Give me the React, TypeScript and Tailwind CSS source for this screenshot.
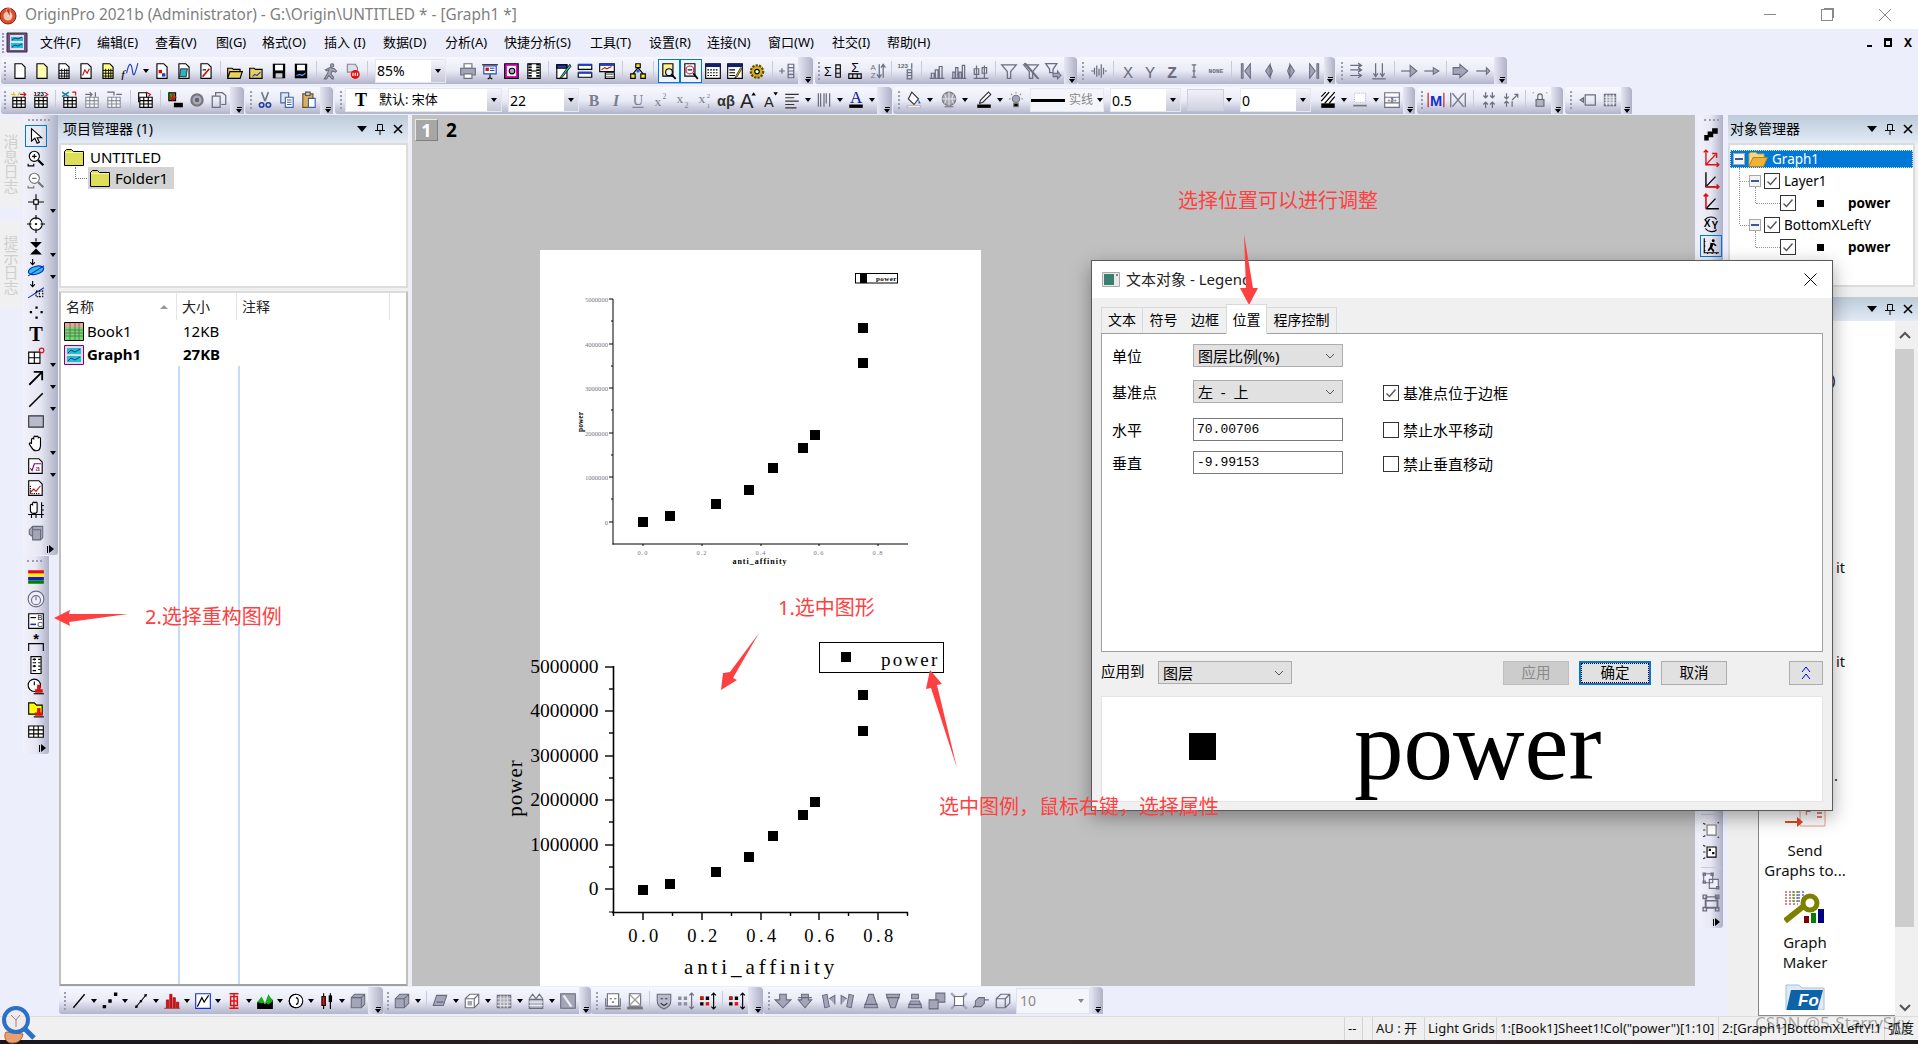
import React from "react";

const pg = (f = "#fff") => <path d="M3.5 1.5h6l3 3v10h-9z" fill={f} stroke="#000" />;
const gl = <path d="M6 6v8M8.5 6v8M10.5 6v8M3.5 7.5h9M3.5 10h9M3.5 12.5h9" stroke="#000" strokeWidth=".8" />;
const tx = (t: string, x: number, y: number, s: number, f = "#000", w = 400, fam = "Liberation Sans") => (
  <text x={x} y={y} fontSize={s} fill={f} fontWeight={w} fontFamily={fam} textAnchor="middle">{t}</text>
);
const gy = (d: string) => <path d={d} fill="#a3a6b8" stroke="#666a7a" strokeWidth=".9" />;
const gs = (d: string) => <path d={d} fill="none" stroke="#6b6e7e" strokeWidth="1.1" />;
const grid = (f = "#fff", c = "#000") => (
  <path d="M2.5 5.5h11v9h-11zM2.5 8.5h11M2.5 11.5h11M6 5.5v9M10 5.5v9" fill={f} stroke={c} />
);
const mag = (c = "#000") => (
  <>
    <circle cx="6.5" cy="6.5" r="4.5" fill="#fff" stroke={c} />
    <path d="M10 10l4.5 4.5" stroke={c} strokeWidth="2" />
  </>
);

const ICONS: Record<string, React.ReactNode> = {
  doc: pg(),
  docY: pg("#ffffb0"),
  docG: <>{pg()}{gl}</>,
  docC: <>{pg()}<path d="M5 12l2-5 2 3 2-4" stroke="#d00" fill="none" /></>,
  docGY: <>{pg("#ffff80")}{gl}</>,
  fx: <><text x="0" y="15" fontSize="12" fontStyle="italic" fontFamily="Liberation Serif">f</text><path d="M5 10c2-10 4-10 5-3s2 6 5-6" stroke="#2040c0" fill="none" /></>,
  docB: <>{pg()}<path d="M5 7h3v3H5z" fill="#d00" /><path d="M8 10h3v3H8z" fill="#2040c0" /></>,
  docT: <>{pg()}<path d="M5 6h6l-1 7H4z" fill="#30b0c0" stroke="#000" strokeWidth=".6" /></>,
  docR: <>{pg()}<path d="M5 13l6-7" stroke="#d00" strokeWidth="1.4" /><path d="M5 7h3" stroke="#000" /></>,
  open: <path d="M1.5 5.5h4l1 1h6v2h2l-2 6h-11zM1.5 14.5l2-6h9" fill="#e8d060" stroke="#000" />,
  openC: <><path d="M1.5 5.5h4l1 1h6v8h-11z" fill="#e8d060" stroke="#000" /><path d="M4 13l2-2 2 1 3-3" stroke="#2040c0" fill="none" /></>,
  save: <><path d="M2.5 1.5h11v13h-11z" fill="#000" /><path d="M4.5 2.5h7v5h-7z" fill="#fff" /><path d="M5 10h6v4H5z" fill="#ccc" /></>,
  saveC: <><path d="M2.5 1.5h11v13h-11z" fill="#000" /><path d="M4.5 2.5h7v5h-7z" fill="#fff" /><path d="M4 12l3-1 2 1 3-2" stroke="#60a0ff" fill="none" /></>,
  run: gy("M9 1.5a1.5 1.5 0 1 1 0 3 1.5 1.5 0 0 1 0-3zM7 5l4 1 2 2-1 1-3-1-1 3 2 2v2H9l-3-3-2 3H2l3-5 1-3-2 1-1-1z"),
  stop: <><path d="M3 2h7l2 3v4H3z" fill="#dde" stroke="#888" /><circle cx="10" cy="11" r="4" fill="#e01010" /><path d="M8 9.5v3M10 9.5v3M12 9.5v3" stroke="#fff" /></>,
  print: <><path d="M4.5 1.5h7v4h-7z" fill="#fff" stroke="#6b6e7e" /><path d="M1.5 5.5h13v6h-13z" fill="#a3a6b8" stroke="#6b6e7e" /><path d="M4.5 10.5h7v4h-7z" fill="#fff" stroke="#6b6e7e" /></>,
  slide: <><path d="M1 2h14v1H1z" fill="#000" /><path d="M2.5 3.5h11v7h-11z" fill="#fff" stroke="#2040c0" /><path d="M4 5h3v3H4z" fill="#d01010" /><path d="M8 5h4v1H8zM8 7h4v1H8z" fill="#2040c0" /><path d="M8 11v3M6 15l2-1 2 1" stroke="#000" fill="none" /></>,
  pink: <><path d="M1.5 1.5h12v13h-12z" fill="#e010c0" stroke="#000" /><path d="M3.5 3.5h8v9h-8z" fill="#fff" /><circle cx="8" cy="8" r="2.5" fill="#b0a0c0" stroke="#000" /></>,
  film: <><path d="M2.5 1.5h11v13h-11z" fill="#fff" stroke="#000" /><path d="M4.5 1.5v13M11.5 1.5v13" stroke="#000" strokeWidth="3" strokeDasharray="1.5 1" /><path d="M5.5 8h5" stroke="#000" /></>,
  pen: <><path d="M2.5 2.5h9v12h-9z" fill="#fff" stroke="#000" /><path d="M2.5 2.5h9v3h-9z" fill="#2040c0" stroke="#000" /><path d="M14 2L6 13l-1 2 2-1 8-10z" fill="#30c0a0" stroke="#000" strokeWidth=".7" /></>,
  lines: <><path d="M2 2.5h12v4H2z" fill="#fff" stroke="#000" /><path d="M2 1.5h12v2H2z" fill="#2040c0" /><path d="M2 9.5h12v4H2z" fill="#fff" stroke="#000" /><path d="M2 8.5h12v2H2z" fill="#2040c0" /></>,
  winC: <><path d="M1.5 1.5h13v7h-13z" fill="#fff" stroke="#000" /><path d="M1.5 1.5h13v2h-13z" fill="#2040c0" /><path d="M3 7l3-2 2 1 4-2" stroke="#d01010" fill="none" /><path d="M6.5 9.5h8v5h-8z" fill="#fff" stroke="#000" /><path d="M7 11h7M7 13h7" stroke="#888" /></>,
  tree: <><path d="M6 1.5h4v3.5H6zM1.5 10.5h4v4h-4zM10.5 10.5h4v4h-4z" fill="#ffe020" stroke="#000" /><path d="M8 5l-4.5 5.5M8 5l4.5 5.5" stroke="#000" /><circle cx="8" cy="8" r="1.5" fill="#2060e0" /></>,
  zdoc: <><path d="M2.5 1.5h9v11h-9z" fill="#fff08a" stroke="#000" /><circle cx="8" cy="9" r="3" fill="#e8f8ff" stroke="#000" /><path d="M10 11l4 4" stroke="#000" strokeWidth="1.6" /></>,
  zred: <><path d="M2.5 1.5h9v11h-9z" fill="#fff" stroke="#000" /><circle cx="7" cy="7" r="3.5" fill="#ffe" stroke="#d01060" /><path d="M10 10l4 5" stroke="#000" strokeWidth="1.6" /><path d="M5 7h4" stroke="#000" /></>,
  cal: <><path d="M1.5 1.5h13v13h-13z" fill="#fff" stroke="#000" /><path d="M1.5 1.5h13v3h-13z" fill="#10206a" /><path d="M3 7h10M3 9.5h10M3 12h10" stroke="#000" strokeDasharray="1.5 1" /></>,
  note: <><path d="M1.5 1.5h13v13h-13z" fill="#fff" stroke="#000" /><path d="M1.5 1.5h13v3h-13z" fill="#10206a" /><path d="M3 7h5M3 9.5h5M3 12h5" stroke="#000" /><path d="M13 5l-4 7-1 2 2-1 4-7z" fill="#e0c020" stroke="#000" strokeWidth=".6" /></>,
  gear: <><circle cx="8" cy="8.5" r="5.5" fill="#d0b020" stroke="#605000" strokeDasharray="2 1" strokeWidth="2" /><circle cx="8" cy="8.5" r="2" fill="#fff" stroke="#000" /></>,
  addG: gs("M1 8h5M3.5 5.5v5M9 2h5v12H9zM9 5h5M9 8h5M9 11h5"),
  sig: <><text x="0" y="12" fontSize="11" fontFamily="Liberation Sans">Σ</text><path d="M10.5 2.5h4v11h-4zM10.5 6h4M10.5 10h4" fill="none" stroke="#000" /></>,
  sigB: <><text x="8" y="9" fontSize="11" textAnchor="middle" fontFamily="Liberation Sans">Σ</text><path d="M2.5 10.5h11v4h-11zM6 10.5v4M10 10.5v4" fill="none" stroke="#000" /></>,
  sort: <>{tx("A", 4.5, 7, 7, "#777")}{tx("Z", 4.5, 14, 7, "#777")}{gs("M10 2v11M8 11l2 3 2-3M13.5 14V3M11.5 5l2-3 2 3")}</>,
  num: <>{tx("123", 6, 5.5, 5.5, "#666", 700)}{gs("M10 7h4v8h-4zM10 9.5h4M10 12h4M14 1v5")}</>,
  barsA: gs("M1.5 14.5h13M3 14V10h2.5v4M6.5 14V7H9v7M10 14V4h2.5v10"),
  barsB: gs("M1.5 14.5h13M2.5 14V9h2v5M5 14V5h2v9M8 14V9h2v5M11 14V3h2v11"),
  barsC: gs("M1.5 14.5h13M4 14V3M11 14V3M2 11h4V6H2zM9 10h4V5H9z"),
  fun: gs("M1.5 2.5h13L9.5 8.5v6h-3v-6z"),
  funX: <>{gs("M1.5 2.5h13L9.5 8.5v6h-3v-6z")}{gs("M2 1l12 14M3 1l12 14")}</>,
  funR: <>{gs("M1.5 1.5h10L8 6.5v3H5v-3z")}{gy("M8 10h4V8l3 4-3 3v-2H8z")}</>,
  spike: gs("M1 8h3M15 8h-2M4 5v6M6 3v10M8 6v6M10 2v12M12 5v6"),
  X: tx("X", 8, 14, 15, "#6b6e7e", 400, "Liberation Mono"),
  Y: tx("Y", 8, 14, 15, "#6b6e7e", 400, "Liberation Mono"),
  Z: tx("Z", 8, 14, 15, "#6b6e7e", 700, "Liberation Mono"),
  Ibar: gs("M6 2.5h4M8 2.5v11M6 13.5h4M6.5 8h3"),
  NONE: tx("NONE", 8, 10, 5.5, "#6b6e7e", 700, "Liberation Mono"),
  first: gy("M3 1.5h1.5v13H3zM6 8l5-6.5v13z"),
  prev: gy("M5 8l4-6v12zM9 2.5l2 5.5-2 5.5z"),
  next: gy("M11 8L7 2v12zM7 2.5L5 8l2 5.5z"),
  last: gy("M11.5 1.5H13v13h-1.5zM10 8L5 1.5v13z"),
  rr1: gs("M2 3h10M9 1l3 2-3 2M2 7h10M9 5l3 2-3 2M2 12h10M9 10l3 2-3 2"),
  rr2: gs("M5 1v12M3 10l2 3 2-3M11 1v12M9 10l2 3 2-3M2 15h12"),
  arR: <>{gs("M1 8h10")}{gy("M9 3l6 5-6 5z")}</>,
  arS: <>{gs("M2 8h9")}{gy("M10 5l5 3-5 3z")}</>,
  arP: <>{gy("M1 5h6V2l7 6-7 6v-3H1z")}</>,
  arT: <>{gs("M2 8h9")}{gy("M11 5l3 3-3 3z")}</>,
  gs: <>{grid()}<path d="M3 1l1 3M1 3l4 .5M9 1L7 4" stroke="#e8c000" /><path d="M9 3h5M12 1l2 2-2 2" stroke="#d01010" fill="none" /></>,
  gn: <>{grid()}{tx("123", 6, 4.8, 5.5, "#000", 700)}<path d="M11 1l3 2-3 2" stroke="#d01010" fill="none" /></>,
  gx: <>{grid("#fff", "#000")}<path d="M1 1l6 4M7 1L1 5" stroke="#2080a0" strokeWidth="1.6" /><path d="M10 1h3v3" stroke="#d01010" fill="none" /></>,
  ga: <>{grid("#fff", "#8a8d9e")}{gs("M2 3h6M6 1l2 2-2 2M11 5V1")}</>,
  gr: <>{grid("#fff", "#8a8d9e")}{gs("M2 1h6v3M10 3h5")}</>,
  gc: <><path d="M1.5 1.5h7v8h-7z" fill="#fff" stroke="#000" />{grid()}<path d="M8 1l4 2-2 2" stroke="#d01010" fill="none" /></>,
  imp: <><path d="M2.5 1.5h6v7h-6z" fill="#20a030" stroke="#000" /><path d="M6 1v6M3 5l3 3 3-3" stroke="#d01010" strokeWidth="1.4" fill="none" /><path d="M7 10.5h8v4H7z" fill="#000" /></>,
  gearG: <><circle cx="8" cy="8" r="5" fill="#a8abbd" stroke="#777" strokeWidth="2" /><circle cx="8" cy="8" r="2" fill="#666" /></>,
  docs: gs("M2 4.5h7v10H2zM5 4V1.5h6L14 4v8h-4"),
  scis: <><path d="M5 1l3 8M11 1L8 9" stroke="#707788" strokeWidth="1.4" /><circle cx="5" cy="12.5" r="2" fill="none" stroke="#2040a0" strokeWidth="1.4" /><circle cx="11" cy="12.5" r="2" fill="none" stroke="#2040a0" strokeWidth="1.4" /></>,
  copy: <><path d="M2.5 1.5h7v9h-7z" fill="#dfe8fa" stroke="#4060a0" /><path d="M6.5 5.5h7v9h-7z" fill="#fff" stroke="#4060a0" /><path d="M8 8h4M8 10h4M8 12h4" stroke="#4060a0" /></>,
  paste: <><path d="M2.5 2.5h9v12h-9z" fill="#d8b060" stroke="#705020" /><path d="M5 1h4v3H5z" fill="#ccc" stroke="#555" /><path d="M7.5 6.5h6v8h-6z" fill="#fff" stroke="#4060a0" /></>,
  B: tx("B", 8, 13, 14, "#7a7d8e", 700, "Liberation Serif"),
  I: <text x="8" y="13" fontSize="14" fill="#7a7d8e" fontStyle="italic" fontWeight="700" fontFamily="Liberation Serif" textAnchor="middle">I</text>,
  U: <>{tx("U", 8, 12, 13, "#7a7d8e", 400, "Liberation Serif")}<path d="M3 14.5h10" stroke="#7a7d8e" /></>,
  sup: <>{tx("x", 6, 13, 12, "#7a7d8e", 400, "Liberation Serif")}{tx("2", 12, 7, 7, "#7a7d8e", 400, "Liberation Serif")}</>,
  sub: <>{tx("x", 6, 11, 12, "#7a7d8e", 400, "Liberation Serif")}{tx("2", 12, 15, 7, "#7a7d8e", 400, "Liberation Serif")}</>,
  sbs: <>{tx("x", 6, 11, 12, "#7a7d8e", 400, "Liberation Serif")}{tx("2", 12, 6, 6, "#7a7d8e", 400, "Liberation Serif")}{tx("1", 12, 15, 6, "#7a7d8e", 400, "Liberation Serif")}</>,
  ab: tx("αβ", 8, 13, 13, "#333", 700, "Liberation Sans"),
  AU: <>{tx("A", 7, 15, 18, "#222", 400)}<path d="M13 1l2 3h-4z" fill="#000" /></>,
  AD: <>{tx("A", 7, 14, 13, "#222", 400)}<path d="M13 4l2-3h-4z" fill="#000" /></>,
  alg: <path d="M2 3h12M2 6h8M2 9h12M2 12h8M2 15h10" stroke="#333" />,
  vb: gs("M3 2v12M5 2v12M8 2v12M10 2v9M13 2v12"),
  Ac: <>{tx("A", 8, 11, 15, "#10208a", 400, "Liberation Serif")}<path d="M2 12h12v3H2z" fill="#000" /></>,
  fil: <><path d="M6 1l6 6-4 5-5-5z" fill="#fff" stroke="#333" /><path d="M2 13h12v2H2z" fill="#fff" stroke="#bbb" /><path d="M12 7l2 4h-2z" fill="#2060e0" /></>,
  sph: <><circle cx="8" cy="7" r="6" fill="#a3a6b8" stroke="#777" /><path d="M2 7h12M8 1v12M4 3c2 3 2 5 0 8M12 3c-2 3-2 5 0 8" stroke="#ddd" fill="none" /><path d="M4 14h8" stroke="#777" /></>,
  pcl: <><path d="M12 1l2 2-7 7-3 1 1-3z" fill="#fff" stroke="#333" /><path d="M2 12h12v3H2z" fill="#000" /></>,
  lamp: <><circle cx="8" cy="7" r="3.2" fill="#a3a6b8" stroke="#777" /><path d="M8 1v1M2 7h1M13 7h1M3.5 2.5l1 1M12.5 2.5l-1 1M6 11h4v3H6z" stroke="#777" /></>,
  hat: <><path d="M2 1.5h12v9H2z" fill="#fff" /><path d="M2 9l7-8M2 5l4-4M5 11l9-10M9 11l5-6" stroke="#000" strokeWidth="1.2" /><path d="M2 11h12v4H2z" fill="#000" /></>,
  lb: <><path d="M3 2h10v8H3z" fill="#fff" stroke="#bbc" strokeDasharray="1 1" /><path d="M2 13h12" stroke="#777" strokeWidth="1.5" /></>,
  tbl: <><path d="M1.5 1.5h13v13h-13zM1.5 5.5h13M1.5 10.5h13M8 5.5v5" fill="#fff" stroke="#6b6e7e" />{tx("+3+", 8, 9.5, 5, "#6b6e7e", 700)}</>,
  MM: <><path d="M1 1.5v13M15 1.5v13" stroke="#d01010" /><text x="8" y="13" fontSize="13" fontWeight="700" fill="#1030d0" textAnchor="middle" fontFamily="Liberation Sans">M</text></>,
  Mx: <><path d="M1.5 1.5v13M14.5 1.5v13M3 2l10 12M13 2L3 14" stroke="#7a7d8e" strokeWidth="1.2" /></>,
  v1: gs("M5 1v5M3 4l2 2 2-2M5 15v-5M3 12l2-2 2 2M11 1v5M9 4l2 2 2-2M11 15v-5M9 12l2-2 2 2"),
  v2: gs("M4 2v5M2 5l2 2 2-2M4 14V9M2 11l2-2 2 2M9 8l5-5M11 3h3v3M9 14V9"),
  lock: <><path d="M1.5 1.5h1M13.5 1.5h1" stroke="#888" /><path d="M4.5 7.5h7v6h-7z" fill="#b0b3c4" stroke="#666" /><path d="M6 7V4.5a2 2 0 0 1 4 0V7" fill="none" stroke="#666" /></>,
  frm: <>{gs("M5.5 3.5h9v9h-9z")}{gy("M1 8l3-2v4z")}</>,
  gdd: <>{gy("M3 3h10v10H3z")}<path d="M5 3v10M8 3v10M11 3v10M3 5.5h10M3 8h10M3 10.5h10" stroke="#eee" /></>,
  ptr: <path d="M4 1.5v11l3-2.5 2 4.5 2-1-2-4h4z" fill="#fff" stroke="#000" />,
  zin: <>{mag()}<path d="M4.5 6.5h4M6.5 4.5v4M1 13v2h5v-2" stroke="#000" fill="none" /></>,
  zout: <>{mag("#777")}<path d="M4.5 6.5h4M1 13v2h5v-2" stroke="#777" fill="none" /></>,
  cross: <><path d="M8 1v14M1 8h14" stroke="#000" /><path d="M5.5 5.5h5v5h-5z" fill="#000" /><path d="M6.5 6.5h3v3h-3z" fill="#fff" /></>,
  tgt: <><circle cx="8" cy="8" r="5.5" fill="#fff" stroke="#000" /><path d="M8 0v4M8 12v4M0 8h4M12 8h4" stroke="#000" /><circle cx="8" cy="8" r="1" fill="#000" /></>,
  pts: <path d="M8 1v3M8 12v3M4 5l4 4 4-4zM4 15l4-4 4 4z" fill="#000" stroke="#000" />,
  ell: <><path d="M5 0v5M3 3l2 2 2-2" stroke="#000" fill="none" /><ellipse cx="8" cy="10" rx="7" ry="3.5" fill="#30c0d8" stroke="#1030d0" transform="rotate(-15 8 10)" /><path d="M1 15l14-9" stroke="#1030d0" /></>,
  ln2: <><path d="M5 0v5M3 3l2 2 2-2" stroke="#000" fill="none" /><path d="M1 15l14-9" stroke="#1030d0" /><path d="M8 9h6v5H8zM11 8v7" fill="none" stroke="#000" strokeDasharray="1.5 1" /></>,
  dots: <path d="M7.5 3h2v2h-2zM2.5 7h2v2h-2zM12 7h2v2h-2zM7.5 12h2v2h-2z" fill="#000" />,
  TT: tx("T", 8, 14, 18, "#000", 700, "Liberation Serif"),
  gA: <><path d="M1.5 4.5h10v10h-10zM1.5 9.5h10M6.5 4.5v10" fill="#fff" stroke="#000" /><circle cx="13" cy="3" r="2" fill="none" stroke="#e01010" /></>,
  ne: <path d="M2 14L13 3M6 2.5h7.5V10" fill="none" stroke="#000" strokeWidth="1.6" />,
  ln: <path d="M2 14L14 2" stroke="#000" strokeWidth="1.4" />,
  rct: <path d="M1.5 2.5h13v10h-13z" fill="#b8bbcb" stroke="#333" />,
  hand: <path d="M4 8V4a1 1 0 0 1 2 0V2a1 1 0 0 1 2 0v0a1 1 0 0 1 2 0v1a1 1 0 0 1 2 0v6c0 3-1 5-4 5-2 0-3-1-4-3L2 8a1 1 0 0 1 2 0z" fill="#fff" stroke="#000" />,
  sqr: <><path d="M1.5 1.5h9l3 3v10h-12z" fill="#fff" stroke="#000" /><path d="M3 10l1.5 2 2-6h6" fill="none" stroke="#800080" />{tx("a", 9.5, 12, 7, "#800080")}</>,
  gdoc: <><path d="M1.5 1.5h9l3 3v10h-12z" fill="#fff" stroke="#000" /><path d="M3 12l3-3 2 2 4-5" stroke="#d01010" fill="none" /><path d="M3 6v7h9" stroke="#000" strokeDasharray="1 1" fill="none" /></>,
  hg: <><path d="M3 8V4a1 1 0 0 1 2 0V2a1 1 0 0 1 2 0 1 1 0 0 1 2 0v7c0 1-1 2-3 2s-3-1-3-3z" fill="#fff" stroke="#000" /><path d="M13 1v14M1 12h14M4 12v3M8 12v3M13 4h2M13 8h2" stroke="#000" /></>,
  box: gy("M2 6l3-3h9v10l-2 2H5v-3L2 10zM5 3v9M5 6h7v9"),
  col: <><path d="M1 2h14v3H1z" fill="#e01010" /><path d="M1 5h14v3H1z" fill="#f8f000" /><path d="M1 8h14v3H1z" fill="#1818e0" /><path d="M1 11h14v3H1z" fill="#008000" /></>,
  cir: <><circle cx="8" cy="8" r="7" fill="#eef" stroke="#6b6e7e" /><circle cx="8" cy="9" r="4" fill="none" stroke="#6b6e7e" /><path d="M8 6v3" stroke="#6b6e7e" /></>,
  leg: <><path d="M1.5 1.5h13v13h-13z" fill="#fff" stroke="#000" /><path d="M3 5h5" stroke="#000" />{tx("B", 11.5, 7, 6.5)}<path d="M3 11h5" stroke="#1030d0" strokeWidth="1.4" />{tx("C", 11.5, 13, 6.5)}</>,
  str: <>{tx("*", 8, 9, 13, "#000", 700)}<path d="M1.5 15V8.5h13V15" fill="none" stroke="#000" /></>,
  rul: <><path d="M3.5 .5h9v15h-9z" fill="#fff" stroke="#000" /><path d="M5 3h3M5 6h3M6.5 2v2M5 9h3M6.5 8v2M5 13h3M10 3h2M10 6h2M10 9h2M10 12h2" stroke="#000" /></>,
  clk: <><circle cx="6.5" cy="6.5" r="5.5" fill="#fff" stroke="#000" /><path d="M6.5 3v3.5" stroke="#000" /><path d="M9 6h3v4h2v3H7v-3h2z" fill="#e01010" /><path d="M6 14h9" stroke="#000" /></>,
  frd: <><path d="M1.5 2.5h5l2 2h5v8h-12z" fill="#ffff00" stroke="#000" /><path d="M9 7h3v4h2v3H7v-3h2z" fill="#e01010" /><path d="M6 15h9" stroke="#000" /></>,
  tb: <path d="M1.5 3.5h13v10h-13zM1.5 7h13M1.5 10.5h13M6 3.5v10M10 3.5v10" fill="#fff" stroke="#000" />,
  l1: <path d="M3 14L13 2" stroke="#000" strokeWidth="1.2" />,
  l2: <path d="M2 14h2v-2H2zM7 9h2V7H7zM12 3h2V1h-2z" fill="#000" stroke="#000" />,
  l3: <><path d="M3 14L13 2" stroke="#000" /><path d="M3 12h2v2H3zM7 7h2v2H7zM11 2h2v2h-2z" fill="#000" /></>,
  br: <path d="M1 14.5h14M3 14V7h2v7zM6 14V2h2v12zM9 14V5h2v9zM12 14V9h2v5z" fill="#e01010" stroke="#900" strokeWidth=".6" />,
  cb: <><path d="M1.5 1.5h13v13h-13z" fill="#fff" stroke="#1030d0" /><path d="M3 13l4-8 2 4 4-6" stroke="#000" fill="none" /></>,
  er: <path d="M4 1.5h8M8 1.5v13M4 14.5h8M5 4h6v8H5zM5 8h6" fill="none" stroke="#e01010" strokeWidth="1.3" />,
  ar: <><path d="M1 15V9l4-3 3 5 3-7 4 3v8z" fill="#000" /><path d="M1 9l4-5 3 6 3-8 4 6-4 3-3-2-3 1z" fill="#18b018" /></>,
  cr: <><circle cx="8" cy="8" r="6" fill="#fff" stroke="#000" /><path d="M8 2a6 6 0 0 0 0 12M8 5a2 3 0 0 1 0 6" fill="none" stroke="#000" /></>,
  cd: <><path d="M5 1v14M11 1v14" stroke="#000" /><path d="M3.5 4h3v8h-3z" fill="#e01010" stroke="#000" /><path d="M9.5 3h3v6h-3z" fill="#000" /></>,
  cb3: gy("M2 5l3-3h9v9l-3 3H2zM5 2v0M2 5h9v9M11 5l3-3"),
  c1: gy("M2 6l4-4h8v8l-4 4H2zM2 6h8v8M10 6l4-4"),
  c2: gy("M2 12l3-9h9l-3 9zM5 9h6"),
  c3: <><path d="M2 6l4-4h8v8l-4 4H2z" fill="#fff" stroke="#6b6e7e" /><path d="M2 6h8v8M10 6l4-4" stroke="#6b6e7e" fill="none" /><path d="M4 8h4v4H4z" fill="#a3a6b8" /></>,
  c4: <>{gy("M2 3h12v11H2z")}<path d="M2 6h12M2 9h12M2 12h12M5 3v11M8 3v11M11 3v11" stroke="#ddd" /></>,
  c5: <>{gs("M2 6l3-4 3 4 3-4 3 4")}<path d="M2 6.5h12v8H2z" fill="#b8bbcb" stroke="#6b6e7e" /><path d="M2 9h12M2 12h12" stroke="#eee" /></>,
  c6: <>{gy("M1.5 1.5h13v13h-13z")}<path d="M4 3l7 10" stroke="#eee" strokeWidth="2" /></>,
  m1: <><path d="M1.5 5.5v7h13v-7" fill="none" stroke="#6b6e7e" /><path d="M3 1.5h10v11H3z" fill="#fff" stroke="#6b6e7e" /><path d="M5 6h2M9 6h2M7 9h2" stroke="#555" /><path d="M1 14h14v1.5H1z" fill="#777" /></>,
  m2: <><path d="M3 1.5h10v11H3z" fill="#fff" stroke="#6b6e7e" /><path d="M3 2l10 10M13 2L3 12" stroke="#999" /><path d="M1 13h14v2.5H1z" fill="#777" /></>,
  m3: <><path d="M2 2h12v6c0 4-3 6-6 7-3-1-6-3-6-7z" fill="#b8bbcb" stroke="#6b6e7e" /><path d="M5 6h2M9 6h2" stroke="#333" /><path d="M5 10l3 2 3-2" stroke="#333" fill="none" /></>,
  m4: <><path d="M1 4h3v3H1zM1 9h3v3H1zM6 4h3v3H6zM6 9h3v3H6z" fill="#8a8d9e" />{gs("M13 1v14M11 3l2-2 2 2M11 13l2 2 2-2")}</>,
  m5: <><path d="M1 4h3v3H1zM6 4h3v3H6zM1 9h3v3H1z" fill="#000" /><path d="M6 9h3v3H6z" fill="#e01010" /><path d="M1 4h3v3H1z" fill="#e01010" /><path d="M13 1v14M11 3l2-2 2 2M11 13l2 2 2-2" fill="none" stroke="#000" /></>,
  o1: gy("M5 2h6v5h4l-7 7-7-7h4z"),
  o2: gy("M5 2h6v5h3l-6 7-6-7h3zM2 5h12"),
  o3: gy("M4 3l4-1 2 11-4 1zM10 6l5-3v8"),
  o4: gy("M12 3L8 2 6 13l4 1zM6 6L1 3v8"),
  o5: gy("M6 2h4l4 12H2zM2 11h12"),
  o6: gy("M2 2h12l-4 12H6zM2 5h12"),
  o7: gy("M5 2h6v4H5zM4 8h8l2 6H2zM2 11h12"),
  o8: gy("M1 7h8v8H1zM7 1h8v8H9V7H7z"),
  o9: <><path d="M1 1l14 14M15 1L1 15" stroke="#a3a6b8" strokeWidth="2" /><path d="M4 4h8v8H4z" fill="#fff" stroke="#6b6e7e" /></>,
  o10: <>{gy("M3 8l3-3h5v5l-3 3H3z")}{gs("M11 7h4M1 14l2-2")}</>,
  o11: gs("M2 6l4-4h8v8l-4 4H2zM2 6h8v8M10 6l4-4"),
  flg: <path d="M2 15v-3h4V9h4V6h4V1H9v3H5v3H2z" fill="#000" />,
  ax1: <path d="M3.5 1v13H15M1.5 3l2-2 2 2M13 12l2 2-2 2M3.5 14L12 5M9 4h4v4" fill="none" stroke="#e01010" strokeWidth="1.2" />,
  ax2: <><path d="M3.5 1v13H15" fill="none" stroke="#000" strokeWidth="1.2" /><path d="M3.5 14L12 5" stroke="#000" /><path d="M3.5 14H15M13 12l2 2-2 2" fill="none" stroke="#e01010" strokeWidth="1.4" /></>,
  ax3: <><path d="M3.5 14H15M3.5 14L12 5" fill="none" stroke="#000" strokeWidth="1.2" /><path d="M3.5 14V1M1.5 3l2-2 2 2" fill="none" stroke="#e01010" strokeWidth="1.4" /></>,
  xy: <>{tx("X", 4.5, 11, 9, "#000", 700)}{tx("Y", 11.5, 12, 9, "#000", 700)}<path d="M3 4c2-3 8-3 10 0M13 13c-2 3-8 2-10-1" fill="none" stroke="#000" /></>,
  rna: <><path d="M2 1v13h13M2 4h1M2 8h1M2 12h1M5 14v1M9 14v1M13 14v1" fill="none" stroke="#000" /><path d="M10 2a1.3 1.3 0 1 1 0 2.6A1.3 1.3 0 0 1 10 2zM7 5l4 .5 2 2-1 .7-2-1.5-1 3 2 2-1 2-2-3-2 2-1-1 2-3 .5-3z" fill="#000" /></>,
  d1: <><path d="M4.5 3.5h8v9h-8z" fill="#fff" stroke="#777" /><path d="M1 2l2 1M1 8h2M1 14l2-1M14 2l1-1M14 14l1 1" stroke="#333" /></>,
  d2: <><path d="M4.5 3.5h8v9h-8z" fill="#fff" stroke="#000" /><path d="M6 5h2v2H6zM9 8h2v2H9z" fill="#000" /><path d="M1 2l2 1M1 8h2M1 14l2-1" stroke="#333" /></>,
  g1: <path d="M1.5 1.5h8v8h-8zM6.5 6.5h8v8h-8zM1 1h2v2H1zM8 1h2v2H8zM1 8h2v2H1zM13 13h2v2h-2z" fill="#eef" stroke="#6b6e7e" />,
  g2: <path d="M3.5 2.5h10v10h-10zM3 6h11v6H3zM1 1h3v3H1zM12 1h3v3h-3zM1 12h3v3H1zM12 12h3v3h-3z" fill="none" stroke="#6b6e7e" strokeWidth="1.2" />,
};

function Ic({ n, s = 18 }: { n: string; s?: number }) {
  return (
    <svg width={s} height={s} viewBox="0 0 16 16" className="shrink-0">
      {ICONS[n]}
    </svg>
  );
}

function Tri() {
  return <span className="h-0 w-0 border-x-[3px] border-t-[4px] border-x-transparent border-t-black" />;
}

const SEP: Record<string, string> = {
  "3": "w-[3px]",
  "6": "w-[6px]",
  "7": "w-[7px]",
  "8": "w-[8px]",
  "9": "w-[9px]",
  "10": "w-[10px]",
  "11": "w-[11px]",
};

// "name" slot, "name+" slot with drop arrow, "!name" pressed slot, "|8" separator 8 wide, "_3" blank 3 wide
function Icons({ list, narrow }: { list: string; narrow?: boolean }) {
  return (
    <>
      {list.split(" ").map((t, i) => {
        if (t[0] === "|")
          return (
            <span key={i} className={`flex h-[20px] shrink-0 justify-center ${SEP[t.slice(1)]}`}>
              <span className="w-px bg-[#c8cad8]" />
            </span>
          );
        if (t[0] === "_") return <span key={i} className={`shrink-0 ${SEP[t.slice(1)]}`} />;
        const on = t[0] === "!";
        const dd = t.endsWith("+");
        const name = t.replace("!", "").replace("+", "");
        return (
          <React.Fragment key={i}>
            <span
              className={
                on
                  ? "flex h-[24px] w-[22px] shrink-0 items-center justify-center border border-[#0078d7] bg-[#eef4fb]"
                  : narrow
                    ? "flex h-[22px] w-[21px] shrink-0 items-center justify-center"
                    : "flex h-[22px] w-[22px] shrink-0 items-center justify-center"
              }
            >
              <Ic n={name} />
            </span>
            {dd && (
              <span className="flex w-[10px] shrink-0 justify-center">
                <Tri />
              </span>
            )}
          </React.Fragment>
        );
      })}
    </>
  );
}

function Grip() {
  return <span className="mr-[1px] block h-[18px] w-0 shrink-0 border-l-2 border-dotted border-[#9a9cb0]" />;
}

function Seg({ children }: { children: React.ReactNode }) {
  return (
    <div className="flex h-[27px] shrink-0 items-center rounded-l-[3px] bg-linear-to-b from-[#f7f8fe] via-[#e9ebf6] to-[#b2b4ca]">
      {children}
    </div>
  );
}

function End({ w = "w-[13px]" }: { w?: string }) {
  return (
    <span className={`flex h-full shrink-0 items-end justify-end pb-[1px] pr-[2px] rounded-r-[4px] bg-linear-to-r from-[#e6e7f2] to-[#aeb0c6] ${w}`}>
      <span className="flex flex-col items-center gap-[1px]">
        <span className="h-px w-[5px] bg-black" />
        <Tri />
      </span>
    </span>
  );
}

function Combo({ w, children, ml }: { w: string; children?: React.ReactNode; ml?: string }) {
  return (
    <div className={`flex h-[24px] shrink-0 items-center border border-[#e4e6f0] bg-white text-[14px] ${w} ${ml ?? ""}`}>
      <span className="flex flex-1 items-center gap-1 overflow-hidden whitespace-nowrap pl-[1px]">{children}</span>
      <span className="flex h-full w-[14px] items-center justify-center bg-linear-to-b from-[#f4f5fb] to-[#c6c8d8]">
        <Tri />
      </span>
    </div>
  );
}

const MENUS = [
  ["文件(F)", "w-[57px]"],
  ["编辑(E)", "w-[58px]"],
  ["查看(V)", "w-[61px]"],
  ["图(G)", "w-[46px]"],
  ["格式(O)", "w-[62px]"],
  ["插入 (I)", "w-[59px]"],
  ["数据(D)", "w-[62px]"],
  ["分析(A)", "w-[59px]"],
  ["快捷分析(S)", "w-[86px]"],
  ["工具(T)", "w-[59px]"],
  ["设置(R)", "w-[58px]"],
  ["连接(N)", "w-[61px]"],
  ["窗口(W)", "w-[64px]"],
  ["社交(I)", "w-[55px]"],
  ["帮助(H)", "w-[50px]"],
];

function TitleBar() {
  return (
    <div className="flex h-[29px] shrink-0 items-center bg-white">
      <svg width="18" height="20" viewBox="0 0 18 20" className="ml-[-1px] shrink-0">
        <circle cx="9" cy="11" r="8" fill="#d8502c" stroke="#902010" />
        <circle cx="9" cy="11" r="4.5" fill="#f4c8b0" />
        <path d="M7 5l4-3v10z" fill="#d03020" stroke="#fff" strokeWidth=".5" />
      </svg>
      <span className="ml-[8px] whitespace-nowrap text-[15.4px] text-[#7f7f7f]">
        OriginPro 2021b (Administrator) - G:\Origin\UNTITLED * - [Graph1 *]
      </span>
      <div className="ml-auto flex items-center pr-[26px]">
        <span className="h-px w-[12px] bg-[#8a8a8a]" />
        <span className="ml-[45px] flex h-[12px] w-[12px] border border-[#8a8a8a] shadow-[2px_-2px_0_-1px_#8a8a8a]" />
        <svg width="14" height="14" viewBox="0 0 14 14" className="ml-[45px]">
          <path d="M1 1l12 12M13 1L1 13" stroke="#8a8a8a" />
        </svg>
      </div>
    </div>
  );
}

function MenuBar() {
  return (
    <div className="flex h-[27px] shrink-0 items-center bg-[#eceffb] text-[13px] text-black">
      <span className="ml-[2px] h-[20px] w-0 border-l-2 border-dotted border-[#9a9cb0]" />
      <svg width="22" height="21" viewBox="0 0 22 21" className="ml-[2px] shrink-0">
        <path d="M1 1h20v19H1z" fill="#7a4a8a" stroke="#333" />
        <path d="M4 3h14v15H4z" fill="#dfe3e8" />
        <path d="M5 5h12v4H5z" fill="#20c0d0" />
        <path d="M5 11h12v5H5z" fill="#20c0d0" />
        <path d="M6 8l3-2 3 1 4-2M6 15l3-2 3 1 4-2" stroke="#1030a0" fill="none" />
      </svg>
      <div className="ml-[12px] flex">
        {MENUS.map(([t, w]) => (
          <span key={t} className={`whitespace-nowrap ${w}`}>{t}</span>
        ))}
      </div>
      <div className="ml-auto flex items-center gap-[12px] pr-[6px] text-[12px] font-bold">
        <span className="mt-[6px] h-[2px] w-[5px] bg-black" />
        <span className="h-[9px] w-[8px] border-2 border-t-[3px] border-black" />
        <span>X</span>
      </div>
    </div>
  );
}

function Toolbar1() {
  return (
    <div className="flex h-[29px] shrink-0 items-center bg-[#eceffb] pl-[1px]">
      <Seg>
        <span className="ml-[3px] mr-[2px]"><Grip /></span>
        <Icons list="doc docY docG docC docGY fx+ docB docT docR |7 open openC save saveC |8 run stop |7" />
        <Combo w="w-[71px]" ml="ml-[4px]">85%</Combo>
        <span className="w-[11px]" />
        <Icons list="print slide pink film |7 pen lines winC |9 tree |9 !zdoc !zred cal note gear |8 addG" />
        <End w="w-[15px]" />
      </Seg>
      <span className="w-[2px]" />
      <Seg>
        <span className="ml-[3px] mr-[1px]"><Grip /></span>
        <Icons list="sig sigB sort |6 num |10 barsA barsB barsC |6 fun funX funR" />
        <End />
      </Seg>
      <Seg>
        <span className="ml-[5px] mr-[3px]"><Grip /></span>
        <Icons list="spike |7 X Y Z Ibar NONE |9 first prev next last" />
        <End w="w-[11px]" />
      </Seg>
      <span className="w-px" />
      <Seg>
        <span className="ml-[5px] mr-[2px]"><Grip /></span>
        <Icons list="rr1 rr2 |8 arR arS |8 arP arT" />
        <End />
      </Seg>
    </div>
  );
}

function Toolbar2() {
  return (
    <div className="flex h-[30px] shrink-0 items-center bg-[#eceffb] pl-[1px]">
      <Seg>
        <span className="ml-[3px] mr-[1px]"><Grip /></span>
        <Icons list="gs gn |7 gx ga gr |10 gc |7 imp gearG docs" />
        <End w="w-[14px]" />
      </Seg>
      <span className="w-px" />
      <Seg>
        <span className="ml-[5px] mr-[1px]"><Grip /></span>
        <Icons list="scis copy paste" />
        <End />
      </Seg>
      <span className="w-[2px]" />
      <Seg>
        <span className="ml-[5px] mr-[2px]"><Grip /></span>
        <Combo w="w-[157px]">
          <span className="mx-[6px]"><Ic n="TT" s={16} /></span>
          <span className="text-[13px]">默认: 宋体</span>
        </Combo>
        <Combo w="w-[71px]" ml="ml-[6px]">22</Combo>
        <span className="w-[4px]" />
        <Icons list="B I U sup sub sbs ab AU AD alg+ vb+ Ac+" />
        <End w="w-[15px]" />
      </Seg>
      <span className="w-px" />
      <Seg>
        <span className="ml-[5px] mr-[2px]"><Grip /></span>
        <Icons list="fil+ _3 sph+ _3 pcl+ lamp" />
        <div className="ml-[3px] flex h-[24px] w-[74px] shrink-0 items-center justify-center gap-1 border border-[#e4e6f0] bg-[#f4f5fb] text-[12px] text-[#888]">
          <span className="h-[3px] w-[34px] bg-black" />
          <span>实线</span>
          <Tri />
        </div>
        <Combo w="w-[71px]" ml="ml-[6px]">0.5</Combo>
        <span className="ml-[6px] h-[22px] w-[37px] shrink-0 border border-[#ccced9] bg-linear-to-b from-[#f0f1f8] to-[#d0d2e0]" />
        <span className="flex w-[10px] justify-center"><Tri /></span>
        <Combo w="w-[71px]" ml="ml-[6px]">0</Combo>
        <span className="w-[6px]" />
        <Icons list="hat+ lb+ tbl" />
        <End w="w-[12px]" />
      </Seg>
      <span className="w-[2px]" />
      <Seg>
        <span className="ml-[4px] mr-[1px]"><Grip /></span>
        <Icons list="MM Mx |9 v1 v2 |7 lock" />
        <End w="w-[12px]" />
      </Seg>
      <span className="w-[2px]" />
      <Seg>
        <span className="ml-[5px] mr-[4px]"><Grip /></span>
        <Icons list="frm gdd" />
        <End w="w-[11px]" />
      </Seg>
    </div>
  );
}

function Controls() {
  return (
    <div className="ml-auto flex items-center gap-[8px] pr-[5px]">
      <span className="h-0 w-0 border-x-[5px] border-t-[6px] border-x-transparent border-t-black" />
      <svg width="10" height="11" viewBox="0 0 10 11">
        <path d="M2.5 .5h5v6h-5zM0 6.5h10M5 7v4" fill="none" stroke="#000" />
      </svg>
      <svg width="10" height="10" viewBox="0 0 10 10">
        <path d="M1 1l8 8M9 1L1 9" stroke="#000" strokeWidth="1.6" />
      </svg>
    </div>
  );
}

const folder = () => (
  <svg width="20" height="17" viewBox="0 0 20 17" className="shrink-0">
    <path d="M.5 2.5l2-2h5l2 2h10v14H.5z" fill="#dede58" stroke="#000" />
    <path d="M1 3.5h18" stroke="#f6f6a0" />
  </svg>
);

const openFolder = (
  <svg width="20" height="17" viewBox="0 0 20 17" className="shrink-0">
    <path d="M1 15V2.5l2-1h5l1.500 1.500H16v3" fill="#f0d890" stroke="#c8a040" />
    <path d="M1 15.500l4-9h14.500l-4 9z" fill="#f2b233" stroke="#c08010" />
  </svg>
);

const LEFT_TOOLS = [
  ["!ptr"], ["zin"], ["zout"], ["cross"], ["tgt", "+"], ["pts"], ["ell", "+"], ["ln2", "+"], ["dots"], ["TT"], ["gA"],
  ["ne", "+"], ["ln", "+"], ["rct", "+"], ["hand"], ["sqr", "+"], ["gdoc", "+"], ["hg"], ["box"],
];

function LeftTools() {
  return (
    <div className="flex w-[35px] shrink-0 flex-col items-start">
      <div className="flex w-[35px] flex-col rounded-br-[3px] bg-linear-to-r from-[#f0f1f9] via-[#e6e7f3] to-[#aeb0c6]">
        <span className="ml-[5px] mb-[4px] mt-[4px] h-px w-[22px] border-t-2 border-dotted border-[#9a9cb0]" />
        {LEFT_TOOLS.map(([n, dd]) => (
          <div key={n} className="flex h-[22px] items-center pl-[2px]">
            {n[0] === "!" ? (
              <span className="flex h-[22px] w-[22px] items-center justify-center border border-[#0078d7]"><Ic n="ptr" /></span>
            ) : (
              <span className="flex w-[22px] justify-center"><Ic n={n} /></span>
            )}
            {dd && <span className="ml-[3px]"><Tri /></span>}
          </div>
        ))}
        <div className="flex h-[12px] items-center justify-end pr-[4px]">
          <span className="mr-[1px] h-[7px] w-px bg-black" />
          <span className="h-0 w-0 border-y-[4px] border-l-[5px] border-y-transparent border-l-black" />
        </div>
      </div>
      <div className="mt-px flex w-[26px] flex-col rounded-br-[3px] bg-linear-to-r from-[#f0f1f9] via-[#e6e7f3] to-[#aeb0c6]">
        <span className="mb-[4px] ml-[4px] mt-[4px] h-px w-[15px] border-t-2 border-dotted border-[#9a9cb0]" />
        {["col", "cir", "leg", "str", "rul", "clk", "frd", "tb"].map((n) => (
          <div key={n} className="flex h-[22px] items-center pl-[2px]">
            <span className="flex w-[22px] justify-center"><Ic n={n} /></span>
          </div>
        ))}
        <div className="flex h-[12px] items-center justify-end pr-[3px]">
          <span className="mr-[1px] h-[7px] w-px bg-black" />
          <span className="h-0 w-0 border-y-[4px] border-l-[5px] border-y-transparent border-l-black" />
        </div>
      </div>
    </div>
  );
}

function RailTab({ t }: { t: string }) {
  return (
    <div className="flex h-[87px] w-[21px] items-center justify-center bg-[#f0f0f0] text-[15px] leading-[20px] text-[#cfcfcf] [writing-mode:vertical-rl]">
      {t}
    </div>
  );
}

function ProjectPanel() {
  return (
    <div className="flex w-[352px] shrink-0 flex-col bg-[#f0f0f0] pr-[2px]">
      <div className="flex h-[28px] shrink-0 items-center bg-linear-to-b from-[#bccbd9] to-[#e2ebf6] pl-[5px] text-[14px]">
        <span className="pb-[2px]">项目管理器 (1)</span>
        <Controls />
      </div>
      <div className="ml-px h-[145px] shrink-0 border-2 border-[#dcdcdc] bg-white pt-[3px] text-[15px]">
        <div className="flex h-[19px] items-center pl-[3px]">
          {folder()}
          <span className="ml-[6px]">UNTITLED</span>
        </div>
        <div className="flex h-[22px] items-center pl-[14px]">
          <span className="mb-[10px] h-[12px] w-[12px] border-b border-l border-dotted border-[#777]" />
          <span className="ml-[1px] flex h-[22px] items-center bg-[#d3d3d3] pl-[2px] pr-[6px]">
            {folder()}
            <span className="ml-[5px]">Folder1</span>
          </span>
        </div>
      </div>
      <div className="ml-px mt-[3px] flex h-0 flex-1 flex-col border-2 border-b-[#a0a0a0] border-x-[#c0c0c0] border-t-[#dcdcdc] bg-white text-[15px]">
        <div className="flex h-[27px] shrink-0 items-center text-[14px] text-[#222]">
          <span className="flex h-full w-[116px] items-center border-r border-[#e4e4e4] pl-[5px]">
            <span>名称</span>
            <span className="ml-auto mr-[8px] h-0 w-0 border-x-[4px] border-b-[4px] border-x-transparent border-b-[#999]" />
          </span>
          <span className="flex h-full w-[60px] items-center border-r border-[#e4e4e4] pl-[5px]">大小</span>
          <span className="flex h-full w-[153px] items-center border-r border-[#e4e4e4] pl-[5px]">注释</span>
        </div>
        <div className="flex h-[23px] shrink-0 items-center">
          <span className="flex w-[116px] items-center pl-[3px]">
            <svg width="20" height="19" viewBox="0 0 20 19" className="shrink-0">
              <path d="M.5 .5h19v18H.5z" fill="#fff" stroke="#000" />
              <path d="M1 1h18v4H1z" fill="#f0a0a0" />
              <path d="M1 5h18v13H1z" fill="#70e060" />
              <path d="M1 8h18M1 11h18M1 14h18M6 1v17M11 1v17M15 1v17" stroke="#556" strokeWidth=".7" />
            </svg>
            <span className="ml-[3px]">Book1</span>
          </span>
          <span className="w-[60px] pl-[6px]">12KB</span>
        </div>
        <div className="flex h-[23px] shrink-0 items-center font-bold">
          <span className="flex w-[116px] items-center pl-[3px]">
            <svg width="20" height="20" viewBox="0 0 20 20" className="shrink-0">
              <path d="M.5 .5h19v19H.5z" fill="#ddd" stroke="#800080" />
              <path d="M3 3h14v6H3zM3 11h14v6H3z" fill="#20c0d0" />
              <path d="M4 8l3-3 4 2 5-3M4 16l3-3 4 2 5-3" stroke="#1030a0" fill="none" />
            </svg>
            <span className="ml-[3px]">Graph1</span>
          </span>
          <span className="w-[60px] pl-[6px]">27KB</span>
        </div>
        <div className="flex flex-1">
          <span className="ml-[117px] h-full w-[2px] bg-[#c4dcf8]" />
          <span className="ml-[58px] h-full w-[2px] bg-[#c4dcf8]" />
        </div>
      </div>
    </div>
  );
}

const XS = [643, 670, 716, 749, 773, 803, 815, 863, 863];
const XT = [
  [643, "0.0"],
  [702, "0.2"],
  [761, "0.4"],
  [819, "0.6"],
  [878, "0.8"],
] as const;
const YL = ["5000000", "4000000", "3000000", "2000000", "1000000", "0"];
const SERIF = "Liberation Serif";

function SmallPlot() {
  const ty = [299, 344, 388, 433, 477, 522];
  const ys = [522, 516, 504, 490, 468, 448, 435, 363, 328];
  return (
    <g>
      <path d="M613 299v245.5M612.5 544h295.5" stroke="#000" strokeWidth="1" fill="none" />
      {ty.map((y, i) => (
        <g key={y}>
          <path d={`M609 ${y}h4`} stroke="#000" />
          {i < 5 && <path d={`M611 ${y + 22}h2`} stroke="#000" />}
          <text x="608" y={y + 2.5} fontSize="6.6" fontFamily={SERIF} fill="#777784" textAnchor="end">{YL[i]}</text>
        </g>
      ))}
      {XT.map(([x, t]) => (
        <g key={t}>
          <path d={`M${x} 544v2`} stroke="#000" />
          <text x={x} y="555" fontSize="6.4" letterSpacing="1" fontFamily={SERIF} fill="#777784" textAnchor="middle">{t}</text>
        </g>
      ))}
      <text x="760" y="564" fontSize="8" letterSpacing="1" fontWeight="700" fontFamily={SERIF} textAnchor="middle">anti_affinity</text>
      <text transform="translate(583 422) rotate(-90)" fontSize="7.5" fontWeight="700" fontFamily={SERIF} textAnchor="middle">power</text>
      {XS.map((x, i) => <rect key={i} x={x - 5} y={ys[i] - 5} width="10" height="10" />)}
      <rect x="855.5" y="273.5" width="42" height="9.5" fill="#fff" stroke="#000" />
      <rect x="860" y="274" width="7" height="9" />
      <text x="876" y="281" fontSize="7" letterSpacing=".4" fontFamily={SERIF} fontWeight="700">power</text>
    </g>
  );
}

function BigPlot() {
  const ty = [667, 711, 756, 800, 845, 889];
  const ys = [890, 884, 872, 857, 836, 815, 802, 731, 695];
  return (
    <g>
      <path d="M613.5 666v247M612 912.5h296" stroke="#000" strokeWidth="1.6" fill="none" />
      {ty.map((y, i) => (
        <g key={y}>
          <path d={`M605 ${y}h8`} stroke="#000" strokeWidth="1.4" />
          {i < 5 && <path d={`M609 ${y + 22}h4`} stroke="#000" strokeWidth="1.4" />}
          <text x="598.5" y={y + 6} fontSize="19.5" fontFamily={SERIF} textAnchor="end">{YL[i]}</text>
        </g>
      ))}
      <path d="M609 912h4" stroke="#000" />
      {XT.map(([x, t]) => (
        <g key={t}>
          <path d={`M${x} 912v8M${x + 29.5} 912v4`} stroke="#000" strokeWidth="1.4" />
          <text x={x + 2} y="942" fontSize="18.5" letterSpacing="3.5" fontFamily={SERIF} textAnchor="middle">{t}</text>
        </g>
      ))}
      <path d="M613.5 912v4" stroke="#000" strokeWidth="1.4" />
      <text x="761" y="973.5" fontSize="21" letterSpacing="3.9" fontFamily={SERIF} textAnchor="middle">anti_affinity</text>
      <text transform="translate(522 788) rotate(-90)" fontSize="21" letterSpacing="1" fontFamily={SERIF} textAnchor="middle">power</text>
      {XS.map((x, i) => <rect key={i} x={x - 5} y={ys[i] - 5} width="10" height="10" />)}
      <rect x="819.5" y="642.5" width="124" height="30" fill="#fff" stroke="#000" />
      <rect x="841" y="652" width="10" height="10" />
      <text x="881" y="666" fontSize="19" letterSpacing="2.2" fontFamily={SERIF}>power</text>
    </g>
  );
}

function Canvas() {
  return (
    <div className="ml-[2px] flex w-[1283px] shrink-0 flex-col overflow-hidden bg-[#c0c0c0]">
      <div className="flex h-[28px] shrink-0 items-center pl-[3px] pt-[2px]">
        <span className="flex h-[22px] w-[23px] items-center justify-center border border-t-[#e8e8e8] border-l-[#e8e8e8] border-r-[#808080] border-b-[#808080] bg-[#a6a6a6] text-[18px] font-bold leading-none text-white">1</span>
        <span className="ml-[8px] text-[19px] font-bold leading-none text-black">2</span>
      </div>
      <div className="ml-[128px] mt-[107px] h-[736px] w-[441px] shrink-0 bg-white">
        <svg width="441" height="736" viewBox="540 250 441 736" className="overflow-visible">
          <SmallPlot />
          <BigPlot />
        </svg>
      </div>
    </div>
  );
}

function BottomBar() {
  return (
    <div className="flex h-[30px] shrink-0 items-start bg-[#eceffb] pl-[59px] pt-px">
      <Seg>
        <span className="ml-[5px] mr-[1px]"><Grip /></span>
        <Icons narrow list="l1+ l2+ l3+ br+ cb+ er+ ar+ cr+ cd+ cb3" />
        <End w="w-[15px]" />
      </Seg>
      <Seg>
        <span className="ml-[4px] mr-[1px]"><Grip /></span>
        <Icons list="c1+ |6 c2+ c3+ c4+ c5+ c6" />
        <End w="w-[12px]" />
      </Seg>
      <Seg>
        <span className="ml-[5px] mr-[3px]"><Grip /></span>
        <Icons list="m1 m2 |7 m3 m4 m5 |7 m5" />
        <End w="w-[15px]" />
      </Seg>
      <Seg>
        <span className="ml-[5px] mr-[1px]"><Grip /></span>
        <Icons list="o1 o2 o3 o4 o5 o6 o7 o8 o9 o10 o11" />
        <span className="ml-[2px] flex h-[26px] w-[74px] shrink-0 items-center justify-between border border-[#dfe1ea] bg-[#f4f5fb] px-[3px] text-[14px] text-[#8a8a8a]">
          10
          <span className="mr-[2px] h-0 w-0 border-x-[3px] border-t-[4px] border-x-transparent border-t-[#888]" />
        </span>
        <End />
      </Seg>
    </div>
  );
}

function Check({ on, d = "" }: { on?: boolean; d?: string }) {
  return (
    <span className={`flex h-[16px] w-[16px] shrink-0 items-center justify-center border border-[#333] bg-white ${d}`}>
      {on && (
        <svg width="12" height="12" viewBox="0 0 12 12">
          <path d="M1.500 6.500l3 3 6-7" fill="none" stroke="#555" strokeWidth="1.4" />
        </svg>
      )}
    </span>
  );
}

function Minus() {
  return (
    <span className="flex h-[12px] w-[12px] shrink-0 items-center justify-center border border-[#a8a8a8] bg-[#f4f4f4]">
      <span className="h-[2px] w-[8px] bg-[#3a5a9a]" />
    </span>
  );
}

function PowerRow() {
  return (
    <div className="flex h-[22px] items-center pl-[26px]">
      <span className="w-[24px] border-t border-dotted border-[#999]" />
      <Check on />
      <span className="ml-[21px] h-[7px] w-[7px] bg-black" />
      <span className="ml-[24px] text-[13.5px] font-bold">power</span>
    </div>
  );
}

function ObjectPanel() {
  return (
    <>
      <div className="flex h-[28px] shrink-0 items-center bg-linear-to-b from-[#bccbd9] to-[#e2ebf6] pl-[2px] text-[14px]">
        <span className="pb-[2px]">对象管理器</span>
        <Controls />
      </div>
      <div className="relative mr-[3px] h-[144px] shrink-0 border-2 border-[#dcdcdc] bg-white pt-[5px] text-[13.5px]">
        <span className="absolute left-[9px] top-[23px] h-[56px] border-l border-dotted border-[#999]" />
        <span className="absolute left-[25px] top-[42px] h-[16px] border-l border-dotted border-[#999]" />
        <span className="absolute left-[25px] top-[86px] h-[16px] border-l border-dotted border-[#999]" />
        <div className="mb-[2px] flex h-[18px] items-center bg-[#0078d7] pl-[3px] text-white outline outline-dotted outline-1 outline-[#cfe6fa] -outline-offset-1">
          <Minus />
          <span className="ml-[3px]">{openFolder}</span>
          <span className="ml-[4px]">Graph1</span>
        </div>
        <div className="flex h-[22px] items-center pl-[10px]">
          <span className="w-[9px] border-t border-dotted border-[#999]" />
          <Minus />
          <span className="ml-[3px]"><Check on /></span>
          <span className="ml-[4px]">Layer1</span>
        </div>
        <PowerRow />
        <div className="flex h-[22px] items-center pl-[10px]">
          <span className="w-[9px] border-t border-dotted border-[#999]" />
          <Minus />
          <span className="ml-[3px]"><Check on /></span>
          <span className="ml-[4px]">BottomXLeftY</span>
        </div>
        <PowerRow />
      </div>
    </>
  );
}

function Apps() {
  return (
    <div className="flex h-0 flex-1">
      <div className="w-[30px] shrink-0 bg-[#efefef]" />
      <div className="flex w-[137px] shrink-0 flex-col overflow-hidden border-b border-l border-[#888] bg-white pt-[48px] text-[14.5px] leading-[20px] text-[#111]">
        <span className="ml-[72px]">)</span>
        <span className="ml-[77px] mt-[168px]">it</span>
        <span className="ml-[77px] mt-[74px]">it</span>
        <span className="ml-[75px] mt-[94px]">.</span>
        <div className="flex w-[92px] flex-col items-center text-[15px]">
          <svg width="42" height="36" viewBox="0 0 42 36" className="mt-[14px] shrink-0">
            <path d="M16 1h17l8 6v20H16z" fill="#fff" stroke="#e4a090" />
            <path d="M33 10h5M33 14h5M33 18h5" stroke="#d85a3a" strokeWidth="1.5" />
            <text x="21" y="16" fontSize="11" fill="#e07050" fontFamily="Liberation Sans">P</text>
            <path d="M1 22h12v-4l6 5-6 5v-4H1z" fill="#e04a20" />
          </svg>
          <span className="mt-[5px]">Send</span>
          <span className="whitespace-nowrap">Graphs to...</span>
          <svg width="42" height="38" viewBox="0 0 42 38" className="mt-[9px] shrink-0">
            <path d="M1 3h13M1 6h13M1 9h13M1 12h13M1 15h13" stroke="#a01010" strokeDasharray="2 2" />
            <path d="M8 3h6M8 6h6M8 9h6M8 12h6" stroke="#18a018" strokeDasharray="2 2" />
            <path d="M14 3h6M14 6h6M14 9h6M14 12h6" stroke="#1818c0" strokeDasharray="2 2" />
            <path d="M1 32l20-16" stroke="#808000" strokeWidth="6" />
            <circle cx="26" cy="14" r="7" fill="none" stroke="#808000" strokeWidth="5" />
            <path d="M20 34V27h5v7z" fill="#800000" />
            <path d="M27 34V24h5v10z" fill="#008000" />
            <path d="M34 34V20h6v14z" fill="#000080" />
          </svg>
          <span className="mt-[5px]">Graph</span>
          <span>Maker</span>
          <svg width="40" height="28" viewBox="0 0 40 28" className="mt-[10px] shrink-0">
            <path d="M1 3h13l3 3h22v22H1z" fill="#dfe9f5" stroke="#a4c0dc" />
            <path d="M6 8h32l-6 22H1z" fill="#0e63a8" />
            <text x="13" y="24" fontSize="17" fontWeight="700" fontStyle="italic" fill="#fff" fontFamily="Liberation Sans">Fo</text>
          </svg>
        </div>
      </div>
      <div className="flex w-[20px] shrink-0 flex-col bg-[#f0f0f0]">
        <span className="flex h-[28px] shrink-0 items-center justify-center">
          <svg width="12" height="8" viewBox="0 0 12 8"><path d="M1 7l5-5 5 5" fill="none" stroke="#555" strokeWidth="2" /></svg>
        </span>
        <span className="h-[578px] w-[19px] shrink-0 bg-[#cdcdcd]" />
        <span className="mb-[4px] mt-auto flex justify-center">
          <svg width="12" height="8" viewBox="0 0 12 8"><path d="M1 1l5 5 5-5" fill="none" stroke="#555" strokeWidth="2" /></svg>
        </span>
      </div>
    </div>
  );
}

function RightTools() {
  return (
    <div className="flex w-[33px] shrink-0 flex-col bg-[#eceffb] pl-[4px]">
      <div className="flex h-[813px] w-[24px] flex-col items-center rounded-br-[3px] bg-linear-to-r from-[#f0f1f9] via-[#e6e7f3] to-[#aeb0c6]">
        <span className="mb-[4px] mt-[4px] h-px w-[15px] border-t-2 border-dotted border-[#9a9cb0]" />
        {["flg", "ax1", "ax2", "ax3", "xy"].map((n) => (
          <span key={n} className="flex h-[22px] items-center"><Ic n={n} /></span>
        ))}
        <span className="flex h-[22px] w-[22px] items-center justify-center border border-[#0078d7]"><Ic n="rna" /></span>
        <span className="mt-[557px] h-px w-[20px] bg-[#c8cad8]" />
        <span className="mt-[4px] flex h-[22px] items-center"><Ic n="d1" /></span>
        <span className="flex h-[22px] items-center"><Ic n="d2" /></span>
        <span className="mt-[4px] h-px w-[20px] bg-[#c8cad8]" />
        <span className="mt-[2px] flex h-[22px] items-center"><Ic n="g1" /></span>
        <span className="flex h-[22px] items-center"><Ic n="g2" /></span>
        <div className="mt-auto flex h-[12px] items-center self-end pr-[3px]">
          <span className="mr-[1px] h-[7px] w-px bg-black" />
          <span className="h-0 w-0 border-y-[4px] border-l-[5px] border-y-transparent border-l-black" />
        </div>
      </div>
    </div>
  );
}

function Sel({ w, children, ml = "" }: { w: string; children: React.ReactNode; ml?: string }) {
  return (
    <div className={`flex h-[23px] shrink-0 items-center justify-between border border-[#adadad] bg-[#e1e1e1] px-[4px] text-[15px] leading-[20px] ${w} ${ml}`}>
      <span className="whitespace-pre">{children}</span>
      <svg width="10" height="6" viewBox="0 0 10 6" className="mr-[3px]">
        <path d="M1 1l4 4 4-4" fill="none" stroke="#555" />
      </svg>
    </div>
  );
}

function Inp({ v }: { v: string }) {
  return (
    <div className="flex h-[23px] w-[150px] shrink-0 items-center border border-[#7a7a7a] bg-white pl-[3px] font-['Liberation_Mono',monospace] text-[13px]">
      {v}
    </div>
  );
}

function Dialog() {
  return (
    <div className="absolute left-[1091px] top-[260px] flex h-[551px] w-[742px] flex-col border border-[#5a5a5a] bg-[#f0f0f0] shadow-[0_6px_18px_rgba(0,0,0,0.35)]">
      <div className="flex h-[37px] shrink-0 items-center bg-white pl-[10px] text-[15px] text-[#222]">
        <svg width="18" height="15" viewBox="0 0 18 15" className="shrink-0">
          <path d="M.5 .5h17v14H.5z" fill="#e8e8e8" stroke="#aaa" />
          <path d="M2 2h10v11H2z" fill="#3a8070" />
          <path d="M14 2h2v2h-2z" fill="#888" />
        </svg>
        <span className="ml-[6px]">文本对象 - Legend</span>
        <svg width="13" height="13" viewBox="0 0 13 13" className="ml-auto mr-[15px]">
          <path d="M.5 .5l12 12M12.5 .5l-12 12" stroke="#000" />
        </svg>
      </div>
      <div className="flex min-h-0 flex-1 flex-col px-[9px]">
        <div className="flex h-[35px] shrink-0 items-end text-[14px]">
          <span className="flex h-[26px] w-[42px] items-center justify-center border border-b-0 border-[#d9d9d9] pb-[2px]">文本</span>
          <span className="flex h-[26px] w-[41px] items-center justify-center border-t border-[#d9d9d9] pb-[2px]">符号</span>
          <span className="flex h-[26px] w-[42px] items-center justify-center border-t border-[#d9d9d9] pb-[2px]">边框</span>
          <span className="z-10 mb-[-1px] flex h-[30px] w-[41px] items-center justify-center border border-b-0 border-[#d9d9d9] bg-white">位置</span>
          <span className="flex h-[26px] w-[70px] items-center justify-center border border-b-0 border-l-0 border-[#d9d9d9] pb-[2px]">程序控制</span>
        </div>
        <div className="flex h-[319px] shrink-0 flex-col border border-[#a0a0a0] bg-white pl-[10px] pt-[10px] text-[15px] leading-[20px]">
          <div className="flex h-[23px] items-center">
            <span className="w-[81px]">单位</span>
            <Sel w="w-[150px]">图层比例(%)</Sel>
          </div>
          <div className="mt-[13px] flex h-[23px] items-center">
            <span className="w-[81px]">基准点</span>
            <Sel w="w-[150px]">左  -  上</Sel>
            <Check on d="ml-[40px] mt-[3px]" />
            <span className="ml-[4px] mt-[3px]">基准点位于边框</span>
          </div>
          <div className="mt-[15px] flex h-[23px] items-center">
            <span className="w-[81px]">水平</span>
            <Inp v="70.00706" />
            <Check d="ml-[40px] mt-[1px]" />
            <span className="ml-[4px] mt-[1px]">禁止水平移动</span>
          </div>
          <div className="mt-[10px] flex h-[23px] items-center">
            <span className="w-[81px]">垂直</span>
            <Inp v="-9.99153" />
            <Check d="ml-[40px] mt-[3px]" />
            <span className="ml-[4px] mt-[3px]">禁止垂直移动</span>
          </div>
        </div>
        <div className="flex h-[44px] shrink-0 items-start pt-[9px] text-[14.5px]">
          <span className="w-[57px]">应用到</span>
          <Sel w="w-[134px]">图层</Sel>
          <span className="ml-[211px] flex h-[24px] w-[66px] items-center justify-center border border-[#bfbfbf] bg-[#cccccc] text-[#8a8a8a]">应用</span>
          <span className="ml-[10px] flex h-[24px] w-[72px] items-center justify-center border-2 border-[#0078d7] bg-[#e1e1e1] outline outline-dotted outline-1 -outline-offset-3 outline-black">确定</span>
          <span className="ml-[10px] flex h-[24px] w-[66px] items-center justify-center border border-[#adadad] bg-[#e1e1e1]">取消</span>
          <span className="ml-[62px] flex h-[24px] w-[34px] items-center justify-center border border-[#adadad] bg-[#e1e1e1]">
            <svg width="10" height="14" viewBox="0 0 10 14">
              <path d="M1 6l4-5 4 5M1 13l4-5 4 5" fill="none" stroke="#0000e0" />
            </svg>
          </span>
        </div>
        <div className="flex h-[106px] shrink-0 items-center overflow-hidden border border-[#e4e4e4] bg-white pl-[87px]">
          <span className="mb-[6px] h-[27px] w-[27px] shrink-0 bg-black" />
          <span className="ml-[138px] mt-[-6px] font-['Liberation_Serif',serif] text-[99px] leading-[100px]">power</span>
        </div>
      </div>
    </div>
  );
}

function Notes() {
  const red = "#ff4040";
  return (
    <>
      <svg width="1918" height="1044" viewBox="0 0 1918 1044" className="pointer-events-none absolute left-0 top-0">
        <path d="M1244 234l9 54 5 0-9 17-9-17 6 0z" fill={red} />
        <path d="M54 618l16-8-1 4 59 0-59 8 1 4z" fill={red} />
        <path d="M759 633l-29 39-7 1-2 17 16-10-4-2z" fill={red} />
        <path d="M930 670l12 14-5 1 20 83-26-80-5 1z" fill={red} />
      </svg>
      <span className="absolute left-[1178px] top-[186px] text-[20px] leading-[30px] text-[#ff4040]">选择位置可以进行调整</span>
      <span className="absolute left-[145px] top-[602px] text-[20px] leading-[30px] text-[#ff4040]">2.选择重构图例</span>
      <span className="absolute left-[778px] top-[593px] text-[20px] leading-[30px] text-[#ff4040]">1.选中图形</span>
      <span className="absolute left-[939px] top-[792px] text-[20px] leading-[30px] text-[#ff4040]">选中图例，鼠标右键，选择属性</span>
      <span className="absolute left-[1755px] top-[1012px] text-[17px] leading-[22px] text-[#00000055]">CSDN @5-StarrySky</span>
      <svg width="38" height="42" viewBox="0 0 38 42" className="absolute left-0 top-[1002px]">
        <path d="M6 30c-3 5 0 11 6 11s10-3 11-9z" fill="#e8a070" stroke="#c06030" />
        <circle cx="16" cy="18" r="12" fill="#f0e8e8" fillOpacity=".6" stroke="#2a70c8" strokeWidth="4" />
        <path d="M25 27l9 9" stroke="#2a70c8" strokeWidth="5" />
        <path d="M11 13l5 5 4-5M16 18v7" stroke="#a08080" fill="none" />
      </svg>
    </>
  );
}

function StatusBar() {
  const cell = "flex h-full shrink-0 items-center overflow-hidden whitespace-nowrap border-l border-[#d4d4d4] pl-[3px] text-[13px] text-[#111]";
  return (
    <div className="flex h-[24px] shrink-0 justify-end border-t border-[#dcdcdc] bg-[#f0f0f0]">
      <span className={`${cell} w-[18px]`}>--</span>
      <span className={`${cell} w-[10px]`} />
      <span className={`${cell} w-[52px]`}>AU : 开</span>
      <span className={`${cell} w-[72px]`}>Light Grids</span>
      <span className={`${cell} w-[222px]`}>1:[Book1]Sheet1!Col("power")[1:10]</span>
      <span className={`${cell} w-[166px]`}>2:[Graph1]BottomXLeftY!1</span>
      <span className={`${cell} w-[34px]`}>弧度</span>
    </div>
  );
}

export default function App() {
  return (
    <div className="relative h-[1044px] w-[1918px] overflow-hidden bg-[#eceffb] font-['Noto_Sans','Noto_Sans_CJK_SC',sans-serif] text-black">
      <div className="flex h-[1044px] flex-col">
        <TitleBar />
        <MenuBar />
        <Toolbar1 />
        <Toolbar2 />
        <div className="flex h-[901px] shrink-0">
          <div className="flex w-[1728px] shrink-0 flex-col">
            <div className="flex h-[871px] shrink-0">
              <div className="flex w-[23px] shrink-0 flex-col gap-[14px] pt-[5px]">
                <RailTab t="消息日志" />
                <RailTab t="提示日志" />
              </div>
              <LeftTools />
              <ProjectPanel />
              <Canvas />
              <RightTools />
            </div>
            <BottomBar />
          </div>
          <div className="flex w-[190px] shrink-0 flex-col bg-[#f0f0f0]">
            <ObjectPanel />
            <div className="mt-[10px] flex h-[24px] shrink-0 items-center bg-linear-to-b from-[#bccbd9] to-[#e2ebf6]">
              <Controls />
            </div>
            <Apps />
          </div>
        </div>
        <StatusBar />
        <div className="h-[4px] shrink-0 bg-linear-to-r from-[#16161e] via-[#3a2420] to-[#20181c]" />
      </div>
      <Dialog />
      <Notes />
    </div>
  );
}
